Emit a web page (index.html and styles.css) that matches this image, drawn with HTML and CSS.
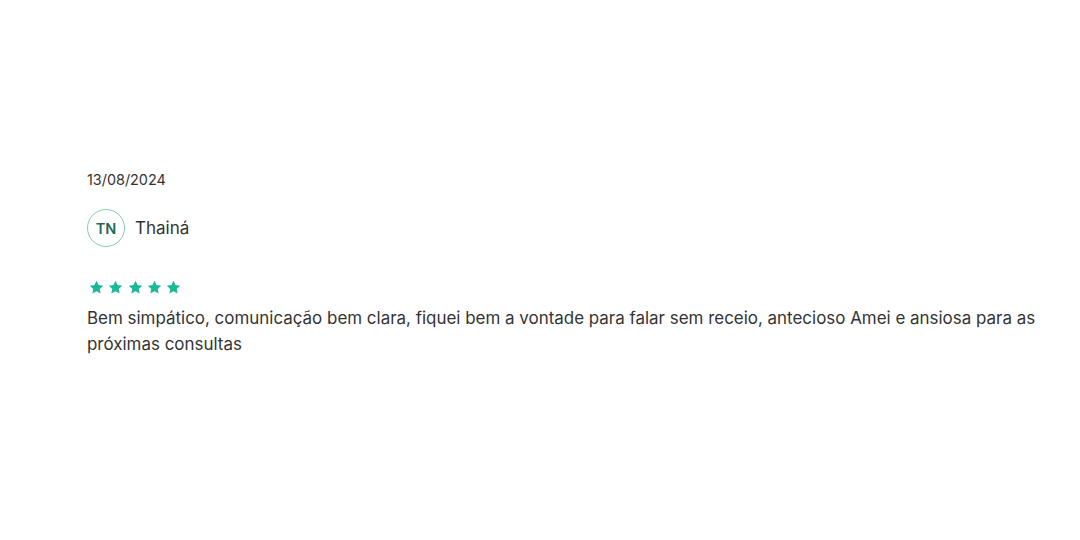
FILE: index.html
```html
<!DOCTYPE html>
<html lang="pt-BR">
<head>
<meta charset="utf-8">
<link rel="stylesheet" href="styles.css">
</head>
<body>
<main class="review">
  <div class="date">13/08/2024</div>
  <div class="author">
    <div class="avatar">TN</div>
    <span class="name">Thainá</span>
  </div>
  <div class="stars">
    <svg viewBox="0 0 24 24"><path d="M12 2.5l2.9 6.1 6.6.8-4.9 4.6 1.3 6.6L12 17.3l-5.9 3.3 1.3-6.6-4.9-4.6 6.6-.8z"/></svg>
    <svg viewBox="0 0 24 24"><path d="M12 2.5l2.9 6.1 6.6.8-4.9 4.6 1.3 6.6L12 17.3l-5.9 3.3 1.3-6.6-4.9-4.6 6.6-.8z"/></svg>
    <svg viewBox="0 0 24 24"><path d="M12 2.5l2.9 6.1 6.6.8-4.9 4.6 1.3 6.6L12 17.3l-5.9 3.3 1.3-6.6-4.9-4.6 6.6-.8z"/></svg>
    <svg viewBox="0 0 24 24"><path d="M12 2.5l2.9 6.1 6.6.8-4.9 4.6 1.3 6.6L12 17.3l-5.9 3.3 1.3-6.6-4.9-4.6 6.6-.8z"/></svg>
    <svg viewBox="0 0 24 24"><path d="M12 2.5l2.9 6.1 6.6.8-4.9 4.6 1.3 6.6L12 17.3l-5.9 3.3 1.3-6.6-4.9-4.6 6.6-.8z"/></svg>
  </div>
  <p class="text">Bem simpático, comunicação bem clara, fiquei bem a vontade para falar sem receio, antecioso Amei e ansiosa para as próximas consultas</p>
</main>
</body>
</html>
```
FILE: styles.css
```css
html, body {
  margin: 0;
  padding: 0;
  background: #ffffff;
}
body {
  font-family: Inter, "Noto Sans", sans-serif;
  color: #333333;
}
.review {
  padding: 170px 28px 0 87px;
  display: flex;
  flex-direction: column;
}
.date {
  font-size: 14.4px;
  line-height: 20px;
  color: #333;
}
.author {
  display: flex;
  align-items: center;
  gap: 10px;
  margin-top: 19px;
}
.avatar {
  width: 36px;
  height: 36px;
  border: 1px solid #7fcfb5;
  border-radius: 50%;
  display: flex;
  align-items: center;
  justify-content: center;
  font-size: 14.5px;
  font-weight: 600;
  color: #1d6a58;
}
.name {
  font-size: 17px;
  color: #333;
}
.stars {
  display: flex;
  gap: 2.3px;
  margin-top: 32px;
  margin-left: 1px;
}
.stars svg {
  width: 17px;
  height: 17px;
  fill: #1db996;
}
.text {
  margin: 9px 0 0;
  font-size: 16.95px;
  line-height: 26px;
  color: #333;
}
```
